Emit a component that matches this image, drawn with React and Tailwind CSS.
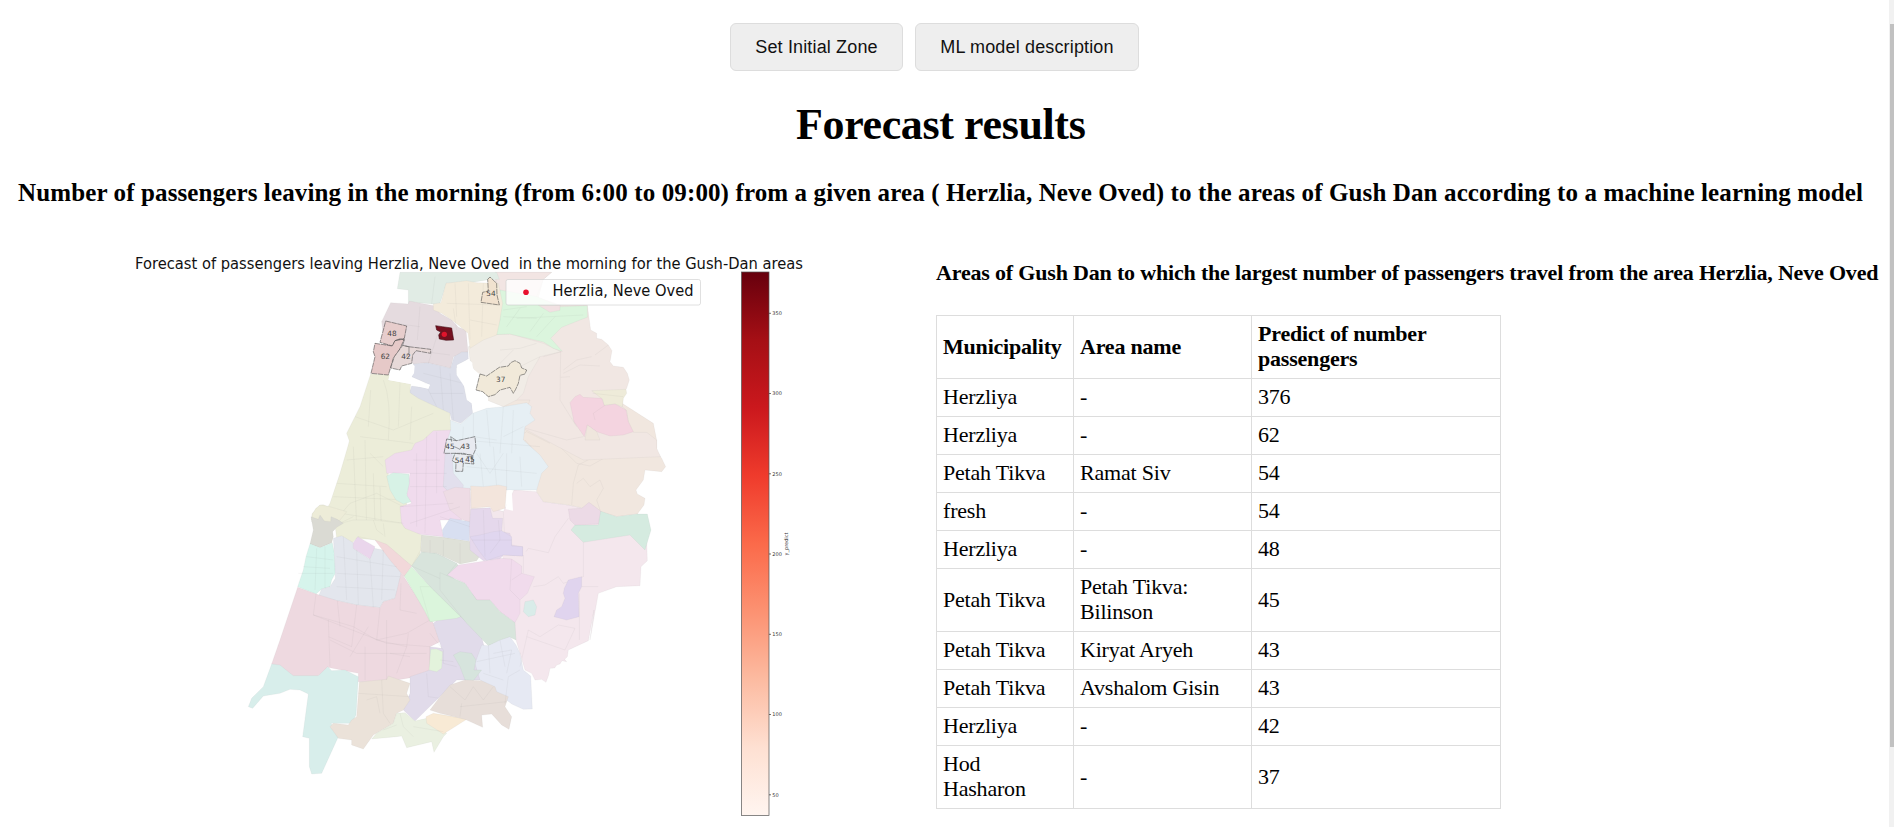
const rows = [
  ["Herzliya", "-", "376"],
  ["Herzliya", "-", "62"],
  ["Petah Tikva", "Ramat Siv", "54"],
  ["fresh", "-", "54"],
  ["Herzliya", "-", "48"],
  ["Petah Tikva", "Petah Tikva: Bilinson", "45"],
  ["Petah Tikva", "Kiryat Aryeh", "43"],
  ["Petah Tikva", "Avshalom Gisin", "43"],
  ["Herzliya", "-", "42"],
  ["Hod Hasharon", "-", "37"],
];

// Each sheet of the map has its own origin; later sheets paint over earlier ones.
const sheets = [
  {
    at: [300, 600],
    areas: [
      // south-east
      ["#f4e7ed", "222,150 290,155 310,185 385,195 480,215 620,300 622,362 603,380 600,437 530,440 475,460 450,600 462,510 462,510 445,602 385,630 382,650 374,658 380,665 366,662 360,672 350,675 344,684 330,685 326,705 318,727 305,718 285,720 275,700 255,690 240,640 228,600 190,360 160,215 190,215"],
      // east
      ["#f1e7df", "250,0 180,-120 250,-300 640,-50 650,0 650,35 665,55 677,80 665,95 615,90 610,120 588,150 592,162 615,175 612,195 592,222 530,230 480,215 385,195 310,185 290,155 285,60"],
      ["#d5ebe0", "480,213 530,230 592,222 622,222 633,270 615,330 570,285 430,307 393,270 405,255 475,255"],
      ["#ecdae6", "385,207 425,205 447,187 482,213 475,252 405,255 390,240"],
      ["#f3e7ec", "60,150 90,140 95,205 160,205 190,215 195,300 120,300"],
    ],
    lines: "M258,335 L265,325 L325,338 L345,290 L385,235 M430,307 L430,410 L370,430 L355,410 L315,435 L280,440 M425,440 L475,440 M418,535 L418,600 M255,0 L290,40 M395,195 L400,130 L415,75 L520,20 L525,-60 M355,15 L410,70 L450,78 L500,50 M480,210 L470,180 L490,145 L480,120 L450,140 L430,115 L410,130 M250,345 L250,400",
  },
  {
    at: [480, 0],
    areas: [
      // north-east
      ["#f1e7e3", "-15,97 155,97 130,118 110,195 262,195 268,240 272,270 290,280 290,295 305,298 325,315 336,332 330,365 340,378 370,382 382,400 388,420 380,445 370,460 367,500 380,512 385,545 400,577 440,577 470,600 470,625 482,650 250,660 60,560 90,480 -20,480"],
      ["#f1ece6", "-95,320 -35,284 30,282 130,310 182,335 120,350 85,410 70,460 50,480 10,500 -40,480 -90,360"],
      ["#f2e5e3", "-15,97 155,97 130,118 110,170 180,195 178,212 150,216 100,195 0,190"],
      ["#dbf5dd", "0,150 110,170 180,200 262,197 262,232 240,240 185,262 152,295 187,334 160,325 130,306 30,282 -20,284 0,240"],
      ["#f1e1e2", "115,196 180,196 180,211 150,217"],
      ["#eeebd9", "275,452 378,448 380,460 370,475 367,500 345,492 312,496 308,478"],
      ["#f4d4e0", "210,488 225,470 240,463 250,472 305,475 313,497 345,492 378,510 385,545 400,575 370,585 330,588 290,575 262,555 253,590 222,545"],
      ["#efe6dd", "262,555 290,575 300,600 255,600"],
    ],
    lines: "M182,335 L180,480 L230,560 M182,412 L210,410 M190,390 L230,360 L275,350 M285,345 L325,315 M190,400 L240,375 L300,378 M278,460 L370,470 M285,540 L280,520 L313,497 M130,350 L185,335 M0,330 L60,325 L110,310 M60,560 L200,600 L250,590 M40,600 L80,575 L150,610 M10,230 L110,235 M20,260 L60,205 M50,235 L250,225 M90,275 L130,220 M110,290 L165,230 M0,370 L40,330 M10,210 L80,200",
  },
  {
    at: [0, 0],
    areas: [
      ["#e1ece5", "180,97 470,97 478,118 440,120 380,130 320,128 300,190 280,192 208,186 205,194 205,150 172,146"],
      ["#e5dbdf", "152,188 205,192 208,183 285,198 300,220 335,240 355,262 378,270 384,335 365,340 340,350 332,385 262,368 220,372 195,345 135,330 125,245"],
      ["#f3ebdb", "318,130 380,122 410,128 475,130 488,190 478,250 470,285 430,300 390,325 384,280 355,255 335,240 305,220 280,210 280,192 303,188"],
      ["#dcdee9", "220,372 262,368 332,385 342,350 365,336 384,336 385,357 350,375 350,400 370,430 380,480 395,490 398,520 362,550 335,540 330,520 250,490 232,475 208,458 215,438 265,445 270,434 215,410"],
      ["#e6eff4", "330,540 362,552 398,520 440,505 490,500 560,488 575,500 570,520 585,540 555,560 550,600 600,645 625,680 605,700 590,750 500,750 390,750 330,780 310,740 320,600"],
      ["#ecedd9", "92,402 150,405 145,420 212,432 210,458 235,475 330,520 332,570 280,600 215,630 165,660 145,685 145,730 200,790 200,850 245,890 240,950 220,980 120,900 40,895 -15,860 -85,840 -84,822 -60,795 -50,794 -36,800 -30,790 0,700 22,625 28,603 20,580 45,530 60,500"],
      ["#f0dbed", "215,630 225,610 250,600 280,572 332,570 322,600 310,740 360,780 365,840 300,840 310,890 210,880 185,855 180,800 215,790 200,770 210,700 140,700 135,660 165,640"],
      ["#e2dfed", "320,645 335,620 340,700 370,735 365,790 310,740 315,640"],
      ["#eedce5", "310,755 345,742 390,745 390,848 365,838 330,810"],
    ],
    lines: "M285,110 L275,192 M240,200 L232,300 M215,330 L330,345 M300,260 L265,370 M340,205 L350,270 M320,190 L470,195 M345,130 L350,230 M385,130 L390,300 M430,130 L425,290 M390,240 L470,255 M125,245 L240,260 M130,420 Q155,480 145,600 M180,430 L175,560 M92,450 L85,560 M45,530 L160,570 L280,520 M60,590 L220,610 M215,500 L210,600 M255,430 L290,500 M300,380 L310,510 M330,400 L340,540 M250,400 L370,430 M270,460 L370,460 M370,560 L365,660 M400,520 L400,590 L470,600 M440,510 L450,620 M490,500 L480,640 M520,510 L515,640 M370,600 L600,620 M420,640 L430,740 M460,620 L470,740 M500,640 L500,750 M540,650 L545,740 M380,680 L590,700 M410,640 L450,700 L490,640 M550,560 L490,590 M230,640 L230,860 M260,590 L255,880 M290,575 L290,760 M210,700 L320,700 M180,800 L340,790 M210,740 L320,740 M210,850 L360,800 M220,660 L300,660 M40,620 L50,860 M75,600 L80,880 M100,700 L105,850 M-10,730 L140,740 M-20,770 L200,780 M90,640 L130,680 M120,740 L125,890 M20,660 L130,650 M-60,810 L190,850 M-30,860 L30,790 L110,760 L190,800 M0,850 L40,830 M390,360 L400,430 M540,380 L600,350",
  },
  {
    at: [-330, 600],
    areas: [
      ["#d7f2e6", "470,108 490,98 537,103 538,130 530,165 543,185 520,192 498,180 480,150"],
      ["#ecedd9", "315,255 370,240 430,240 515,250 525,265 575,285 572,330 545,378 490,335 435,300 385,290 365,310 320,295"],
      ["#edecd8", "258,205 270,195 300,200 350,215 330,240 300,255 245,245 247,222"],
      ["#dadad3", "243,230 265,238 270,225 283,243 302,245 303,230 322,238 340,250 320,262 308,275 310,290 305,308 270,323 240,312 250,270"],
      ["#d6f4ec", "240,311 270,323 307,308 313,340 316,400 305,420 300,440 275,447 258,462 203,440 220,390 228,350"],
      ["#e3e6ed", "310,295 335,287 370,308 370,325 418,357 432,325 460,330 500,370 513,400 508,435 495,475 460,485 450,503 380,495 322,482 265,470 275,447 300,440 316,415 313,340"],
      ["#ead6ec", "383,290 435,320 420,357 370,325 370,308"],
      ["#f2d8da", "435,300 470,313 545,378 523,410 480,360"],
      ["#eed9e0", "203,442 258,462 322,482 380,495 450,503 460,485 495,475 513,400 523,412 610,550 630,605 600,620 600,690 560,710 470,725 385,725 385,700 293,682 265,707 185,707 125,672 150,600"],
      ["#d8e4dc", "545,378 575,335 620,340 680,370 690,385 660,405 700,440 750,480 755,620 740,590 650,500 600,440"],
      ["#dfe1d8", "575,285 640,292 725,305 755,340 740,362 690,372 620,340 573,335"],
      ["#dbf5dc", "523,408 545,380 600,440 692,530 680,535 600,545 585,515"],
      ["#e1dbea", "610,550 630,535 692,530 755,592 790,720 680,720 640,760 555,843 520,810 540,760 540,710 600,690 600,620 635,625"],
      ["#d8dff1", "637,270 660,235 720,245 718,303 640,292"],
      ["#e3f3dc", "602,628 620,627 638,635 635,685 620,695 597,690"],
      ["#d8eeeb", "125,672 150,675 190,707 265,707 293,680 305,692 345,690 385,710 378,825 365,850 303,850 325,890 275,1000 245,1002 238,980 238,895 218,890 235,762 210,750 180,748 150,760 100,768 68,805 55,800 65,775 100,740"],
      ["#ebe2d9", "388,726 470,718 475,708 540,730 530,760 540,780 520,810 500,820 490,850 430,885 400,927 365,915 365,900 325,895 300,860 310,850 355,855 365,840 380,830"],
      ["#eaf0e1", "490,850 500,820 525,818 555,843 590,835 650,880 640,890 612,937 605,905 530,923 515,888 500,890 425,897 440,880"],
      ["#f8ead5", "588,830 610,820 700,835 710,838 640,882 590,850"],
    ],
    lines: "M205,400 L310,400 M230,350 L310,360 M260,325 L255,450 M285,320 L285,445 M220,380 L300,385 M340,290 L350,480 M380,330 L385,495 M320,350 L500,380 M320,400 L510,410 M420,357 L430,500 M460,330 L455,480 M320,440 L495,450 M258,462 L250,525 L320,545 L370,560 L440,600 L530,580 L600,540 M322,482 L330,560 M380,495 L365,620 L295,590 M450,503 L440,600 L530,620 L535,580 M295,540 L300,680 M415,560 L360,650 M470,540 L470,720 M405,620 L405,720 M250,525 L470,610 L600,620 M300,600 L380,640 L590,640 M530,620 L500,700 M480,640 L540,650 M513,430 L510,510 L560,520 M430,240 L440,270 L460,285 M460,250 L465,290 M545,378 L640,420 L680,370 M600,300 L600,340 M640,300 L640,350 M690,310 L690,370 M585,455 L605,470 L610,540 M600,580 L640,630 L640,670 L680,680 M590,700 L595,770 L630,775 M455,720 L460,820 L480,850 M385,760 L540,770 M410,780 L440,770 L450,820 M510,820 L520,860 L550,890 M460,870 L500,855 M550,860 L640,875",
  },
  {
    at: [300, 600],
    areas: [
      ["#f3e5dc", "92,138 130,140 175,135 200,140 195,205 160,215 150,200 94,205"],
      ["#e5d8ec", "92,208 150,203 158,235 188,235 185,275 210,280 215,315 248,320 248,348 190,345 180,357 130,362 90,330 88,260"],
      ["#e0d6ef", "90,290 120,285 160,275 185,272 215,290 215,318 248,320 248,348 190,345 140,362 115,330"],
      ["#f1dbec", "22,405 55,375 120,365 185,355 215,357 245,378 245,400 283,410 262,460 240,480 240,520 225,548 180,515 150,480 110,480 75,430"],
      ["#d8e5dc", "0,398 75,430 110,480 150,480 180,515 225,548 228,600 210,592 145,617 80,550 0,450"],
      ["#d9ece9", "255,485 280,480 290,500 285,525 265,530 250,515"],
      ["#e0d4ee", "373,445 385,420 425,410 425,440 415,460 417,530 380,540 342,530 350,510 365,500 375,475 370,460"],
      ["#dbf5dc", "-60,440 -30,440 62,530 50,535 -30,545"],
      ["#e6e9f3", "125,615 145,617 180,600 210,590 228,615 240,640 250,690 272,708 277,807 250,808 215,792 200,780 120,720 105,670"],
      ["#d6e4dd", "40,645 60,635 95,640 108,660 102,690 125,690 100,722 75,720 60,680"],
      ["#e7ded9", "0,770 30,735 75,720 125,722 165,740 170,755 205,770 195,800 215,830 207,868 185,855 155,822 125,825 128,862 75,838 0,820 -30,810"],
      ["#ffffff", "205,150 215,150 219,212 197,208"],
    ],
    lines: "M0,230 L90,260 M95,300 L215,300 M130,210 L135,350 M175,240 L180,300 L150,340 M215,357 L210,450 L240,480 M245,400 L215,420 M180,600 L195,680 M145,617 L150,700 M110,665 L225,640 M195,790 L205,710 L240,690 M130,700 L190,720 M160,640 L215,630 L200,700 M240,680 L265,570 L300,590 L355,555 L405,565 L375,630 L260,590 M60,800 L200,785 M65,790 L60,830 M30,740 L75,780 L100,740 L130,780 L160,740 M418,535 L418,460 M0,660 L40,665",
  },
];

const highlights = [
  ["#e7cdcc", "137,243 200,258 193,295 165,302 157,318 120,307 130,270"],
  ["#e6c9c8", "105,310 157,318 165,302 193,297 178,330 160,355 145,405 93,400 105,350 100,335"],
  ["#e7d9d8", "188,316 205,320 272,328 272,340 228,332 218,345 215,370 185,378 180,390 152,384 163,350"],
  ["#f1e2cf", "443,118 450,111 470,130 471,165 478,195 423,187 428,157 445,153"],
  ["#f1e9d9", "420,402 440,408 478,382 505,378 512,368 525,362 540,370 545,384 560,390 555,402 540,406 535,430 527,448 520,460 510,442 480,450 465,464 445,470 428,455 408,450"],
  ["#e8eaf0", "320,597 350,602 405,590 408,625 398,648 370,640 312,640"],
  ["#e9ebef", "345,640 395,645 402,672 370,669 368,694 347,694 348,669 337,662"],
];

const labels = [
  ["48", 156, 287], ["62", 136, 357], ["42", 198, 357], ["54", 453, 167], ["37", 482, 425],
  ["45", 330, 627], ["43", 376, 627], ["54", 358, 669], ["45", 390, 665],
];

const ticks = [[350, 313.3], [300, 393.5], [250, 473.8], [200, 554], [150, 634.3], [100, 714.5], [50, 794.8]];

const reds = ["#67000d", "#a50f15", "#cb181d", "#ef3b2c", "#fb6a4a", "#fc9272", "#fcbba1", "#fee0d2", "#fff5f0"];

function ForecastMap() {
  return (
    <svg viewBox="0 250 936 577" className="block h-[577px] w-[936px] shrink-0 font-['DejaVu_Sans',sans-serif]">
      <defs>
        <linearGradient id="reds" x1="0" y1="0" x2="0" y2="1">
          {reds.map((c, i) => (
            <stop key={c} offset={i / 8} stopColor={c} />
          ))}
        </linearGradient>
      </defs>
      <g transform="translate(340 240) scale(0.33333)">
        {sheets.map((s, i) => (
          <g key={i} transform={`translate(${s.at[0]} ${s.at[1]})`}>
            {s.areas.map(([fill, points], j) => (
              <polygon key={j} points={points} fill={fill} stroke={fill === "#ffffff" ? "none" : "#8a8a8a"} strokeOpacity="0.1" strokeWidth="2" />
            ))}
            <path d={s.lines} fill="none" stroke="#777" strokeOpacity="0.1" strokeWidth="2" strokeLinejoin="round" />
          </g>
        ))}
        <polygon fill="#fff" points="385,357 397,368 398,385 415,400 420,403 410,450 430,458 445,470 443,490 420,508 405,500 398,510 395,490 382,480 380,450 350,405 350,385" />
        <polygon fill="#fff" points="152,386 180,391 187,380 215,370 224,378 222,400 215,410 217,424 270,434 265,447 210,432 145,420" />
        {highlights.map(([fill, points]) => (
          <polygon key={points} points={points} fill={fill} stroke="#333" strokeOpacity="0.75" strokeWidth="2" strokeDasharray="16 2" strokeLinejoin="round" />
        ))}
        <path d="M165,302 Q180,292 193,300 L188,316 M196,318 L207,320 L207,340 L198,350 M335,605 L332,590 L350,602 M343,620 L360,628 L365,620 M380,650 L395,650 L395,668" fill="none" stroke="#555" strokeWidth="1.6" />
        <polygon points="287,257 307,260 335,264 341,300 318,301 298,297 296,285 302,276 290,270" fill="#74101f" stroke="#3b0710" strokeWidth="1.6" />
        <circle cx="313" cy="283" r="8" fill="#e0142c" />
        {labels.map(([t, x, y], i) => (
          <text key={i} x={x} y={y} fontSize="22" textAnchor="middle" fill="#444">{t}</text>
        ))}
      </g>
      <rect x="506" y="279.500" width="194.500" height="25.500" rx="2" fill="#fff" fillOpacity="0.8" stroke="#ccc" strokeOpacity="0.6" />
      <circle cx="526" cy="292.300" r="2.800" fill="#e8112d" />
      <text x="552.500" y="296.200" fontSize="15" textLength="141" lengthAdjust="spacingAndGlyphs" fill="#111">Herzlia, Neve Oved</text>
      <rect x="741.500" y="272" width="27.500" height="543.500" fill="url(#reds)" stroke="#555" strokeWidth="0.7" />
      {ticks.map(([t, y]) => (
        <g key={t}>
          <path d={`M769,${y} h2`} stroke="#333" strokeWidth="0.7" />
          <text x="772.300" y={y + 1.8} fontSize="5" fill="#333">{t}</text>
        </g>
      ))}
      <text transform="translate(787.5 555.5) rotate(-90)" fontSize="5" textLength="23" lengthAdjust="spacingAndGlyphs" fill="#333">y_predict</text>
      <text x="135" y="268.500" fontSize="15" textLength="668" lengthAdjust="spacingAndGlyphs" xmlSpace="preserve" className="whitespace-pre" fill="#111">
        {"Forecast of passengers leaving Herzlia, Neve Oved  in the morning for the Gush-Dan areas"}
      </text>
    </svg>
  );
}

export default function App() {
  return (
    <div className="flex h-[827px] w-full overflow-hidden bg-white font-['Liberation_Serif',serif] text-black">
      <main className="flex min-w-0 flex-1 flex-col">
        <nav className="flex gap-3 pt-[23px] pl-[730px] font-['Liberation_Sans',sans-serif] text-[18px] tracking-[0.15px]">
          <button className="h-12 w-[173px] rounded-md border border-[#ddd] bg-[#eee] text-[#111]">Set Initial Zone</button>
          <button className="h-12 w-[224px] rounded-md border border-[#ddd] bg-[#eee] text-[#111]">ML model description</button>
        </nav>
        <h1 className="mt-[29px] pl-[796px] text-[44px] leading-[50px] font-bold tracking-[-0.37px] whitespace-nowrap">Forecast results</h1>
        <h2 className="mt-[29px] pl-[18px] text-[25px] leading-[28px] font-bold tracking-[0.123px] whitespace-nowrap">
          Number of passengers leaving in the morning (from 6:00 to 09:00) from a given area ( Herzlia, Neve Oved) to the areas of Gush Dan according to a machine learning model
        </h2>
        <div className="mt-[43px] flex">
          <ForecastMap />
          <section className="pt-[10px]">
            <h3 className="text-[22px] leading-[25px] font-bold tracking-[-0.18px] whitespace-nowrap">
              Areas of Gush Dan to which the largest number of passengers travel from the area Herzlia, Neve Oved
            </h3>
            <table className="mt-[30px] w-[565px] table-fixed border-collapse text-left text-[22px] leading-[25px] tracking-[-0.2px]">
              <colgroup>
                <col className="w-[137px]" />
                <col className="w-[178px]" />
                <col className="w-[249px]" />
              </colgroup>
              <thead>
                <tr>
                  {["Municipality", "Area name", "Predict of number passengers"].map((h) => (
                    <th key={h} className="border border-[#ddd] px-1.5 pt-[5px] pb-[7px] font-bold">{h}</th>
                  ))}
                </tr>
              </thead>
              <tbody>
                {rows.map((r, i) => (
                  <tr key={i}>
                    {r.map((c, j) => (
                      <td key={j} className="border border-[#ddd] px-1.5 pt-[5px] pb-[7px]">{c}</td>
                    ))}
                  </tr>
                ))}
              </tbody>
            </table>
          </section>
        </div>
      </main>
      <div className="w-[5px] shrink-0 bg-[#f1f1f1] pt-6 pl-px">
        <div className="h-[723px] bg-[#c1c1c1]" />
      </div>
    </div>
  );
}
